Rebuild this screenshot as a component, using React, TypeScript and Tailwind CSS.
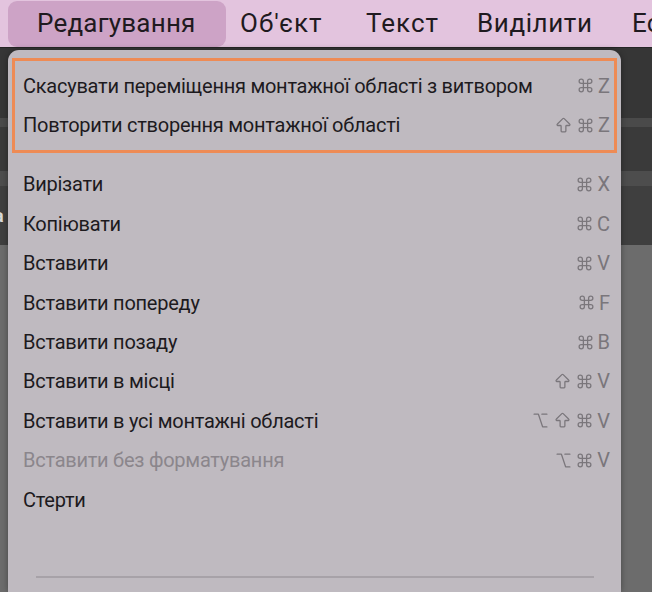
import React from "react";
import { ArrowBigUp, Command, Option } from "lucide-react";

type Item = { label: string; keys: string[]; disabled?: boolean };

const TOP_ITEMS: Item[] = [
  { label: "Скасувати переміщення монтажної області з витвором", keys: ["cmd", "Z"] },
  { label: "Повторити створення монтажної області", keys: ["shift", "cmd", "Z"] },
];

const ITEMS: Item[] = [
  { label: "Вирізати", keys: ["cmd", "X"] },
  { label: "Копіювати", keys: ["cmd", "C"] },
  { label: "Вставити", keys: ["cmd", "V"] },
  { label: "Вставити попереду", keys: ["cmd", "F"] },
  { label: "Вставити позаду", keys: ["cmd", "B"] },
  { label: "Вставити в місці", keys: ["shift", "cmd", "V"] },
  { label: "Вставити в усі монтажні області", keys: ["opt", "shift", "cmd", "V"] },
  { label: "Вставити без форматування", keys: ["opt", "cmd", "V"], disabled: true },
  { label: "Стерти", keys: [] },
];

function Key({ k }: { k: string }) {
  const color = "#7a767b";
  if (k === "cmd") return <Command size={17} strokeWidth={1.8} color={color} />;
  if (k === "shift") return <ArrowBigUp size={19} strokeWidth={1.6} color={color} />;
  if (k === "opt") return <Option size={17} strokeWidth={1.9} color={color} />;
  return <span className="text-[20px] leading-none">{k}</span>;
}

function Shortcut({ keys }: { keys: string[] }) {
  return (
    <div className="flex items-center gap-[4px] text-[#7a767b]">
      {keys.map((k, i) => (
        <Key key={i} k={k} />
      ))}
    </div>
  );
}

function Row({ item, className }: { item: Item; className: string }) {
  return (
    <div className={`flex items-center justify-between h-[39.4px] ${className}`}>
      <span className={`text-[20px] tracking-[-0.25px] ${item.disabled ? "text-[#8b868c]" : "text-[#1d1a1e]"}`}>
        {item.label}
      </span>
      <Shortcut keys={item.keys} />
    </div>
  );
}

export default function App() {
  return (
    <div className="relative w-[652px] h-[592px] overflow-hidden bg-[#6c6c6c] font-['Roboto','Liberation_Sans',sans-serif]">
      <div className="flex items-center h-[48px] bg-[#e3c4de] border-b border-[#262626] text-[26px] tracking-[0.2px] text-[#1f1a20] whitespace-nowrap">
        <div className="ml-[8px] h-[46px] w-[218px] shrink-0 rounded-[9px] bg-[#cda3c6] flex items-center pl-[29px]">
          Редагування
        </div>
        <span className="ml-[14px] w-[126px] shrink-0 tracking-[1px]">Об'єкт</span>
        <span className="w-[111px] shrink-0 tracking-[1px]">Текст</span>
        <span className="w-[155px] shrink-0 tracking-[0.6px]">Виділити</span>
        <span className="shrink-0">Ес</span>
      </div>

      <div className="flex flex-col">
        <div className="h-[70px] bg-[#363636]" />
        <div className="h-[9px] bg-[#4a4a4a]" />
        <div className="h-[44px] bg-[#3a3a3a]" />
        <div className="h-[15px] bg-[#4d4d4d]" />
        <div className="h-[59px] bg-[#3f3f3f] flex items-center">
          <span className="-ml-[6px] text-[18px] font-bold text-[#d8d8d8]">a</span>
        </div>
      </div>

      <div className="absolute left-[8px] top-[50px] w-[613px] bottom-0 rounded-t-[11px] bg-[#bfbac0] shadow-[0_0_6px_rgba(0,0,0,0.35)]">
        <div className="mt-[8px] mx-[4px] border-[3px] border-[#ee8b55] py-[5px]">
          {TOP_ITEMS.map((it) => (
            <Row key={it.label} item={it} className="pl-[8px] pr-[4px]" />
          ))}
        </div>
        <div className="mt-[12px]">
          {ITEMS.map((it) => (
            <Row key={it.label} item={it} className="pl-[15px] pr-[11px]" />
          ))}
        </div>
        <div className="mt-[57px] ml-[28px] mr-[27px] h-[2px] bg-[#a7a2a8]" />
      </div>
    </div>
  );
}
